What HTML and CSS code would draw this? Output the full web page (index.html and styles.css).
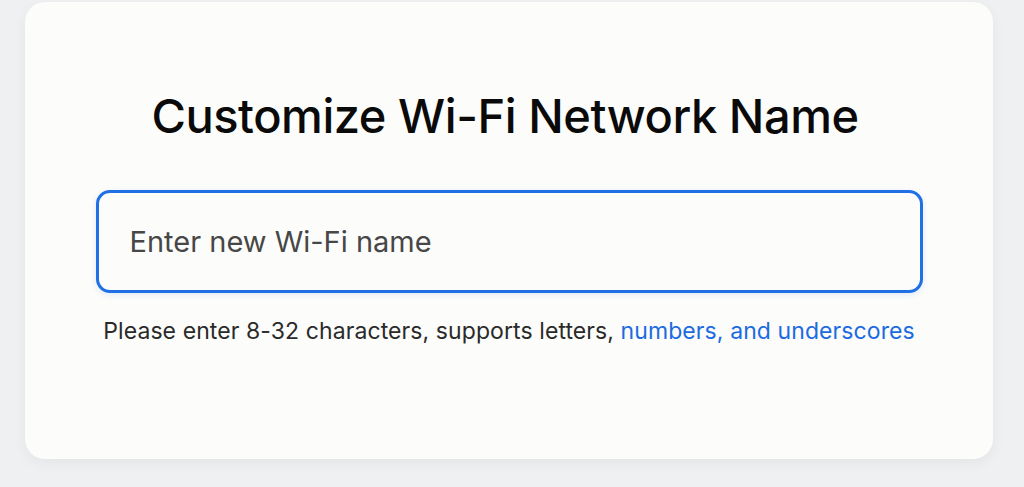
FILE: index.html
```html
<!DOCTYPE html>
<html lang="en">
<head>
<meta charset="utf-8">
<link rel="stylesheet" href="styles.css">
</head>
<body>
<div class="page">
  <div class="card">
    <h1 class="title">Customize Wi-Fi Network Name</h1>
    <div class="field">
      <input class="input" type="text" placeholder="Enter new Wi-Fi name">
    </div>
    <p class="hint">Please enter 8-32 characters, supports letters, <span class="hint-blue">numbers, and underscores</span></p>
  </div>
</div>
</body>
</html>
```
FILE: styles.css
```css
html, body {
  margin: 0;
  padding: 0;
}
body {
  background: #eff0f2;
  width: 1024px;
  height: 487px;
  overflow: hidden;
  font-family: Inter, "Noto Sans", sans-serif;
}
.page {
  padding: 2px 31px 0 25px;
}
.card {
  height: 457px;
  background: #fcfcfa;
  border-radius: 20px;
  box-shadow: 0 4px 14px rgba(0, 0, 0, 0.05);
  display: flex;
  flex-direction: column;
  align-items: center;
  box-sizing: border-box;
  padding-top: 84px;
}
.title {
  margin: 0 8px 0 0;
  font-size: 47px;
  font-weight: 500;
  color: #0a0a0a;
  line-height: 60px;
  letter-spacing: -0.45px;
}
.field {
  margin-top: 44px;
  width: 827px;
}
.input {
  display: block;
  width: 100%;
  height: 103px;
  box-sizing: border-box;
  border: 3px solid #1f6fe5;
  border-radius: 14px;
  background: #fcfcfa;
  padding: 0 0 0 31px;
  font-family: Inter, "Noto Sans", sans-serif;
  font-size: 29px;
  color: #333;
  outline: none;
  box-shadow: 0 2px 6px rgba(31, 111, 229, 0.12);
}
.input::placeholder {
  color: #474747;
}
.hint {
  margin: 23px 0 0;
  font-size: 23px;
  line-height: 30px;
  color: #2a2a2a;
  letter-spacing: 0.09px;
}
.hint-blue {
  color: #1b6be0;
}
```
